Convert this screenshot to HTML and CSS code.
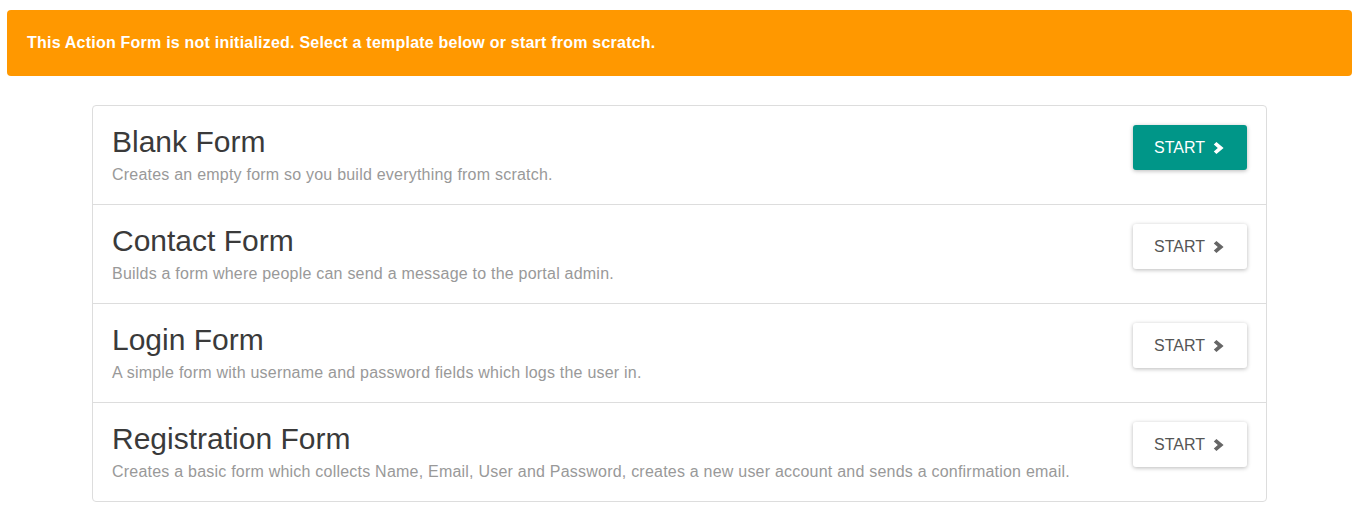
FILE: index.html
```html
<!DOCTYPE html>
<html lang="en">
<head>
<meta charset="utf-8">
<title>Action Form</title>
<link rel="stylesheet" href="styles.css">
</head>
<body>
<div class="alert">This Action Form is not initialized. Select a template below or start from scratch.</div>
<div class="list">
  <div class="item">
    <div class="info">
      <h3 class="title">Blank Form</h3>
      <p class="desc">Creates an empty form so you build everything from scratch.</p>
    </div>
    <button class="btn btn-primary">START <svg class="chev" viewBox="0 0 12 12" width="12" height="12"><polygon points="0.8,2.6 3.4,0 10.6,6 3.4,12 0.8,9.4 4.8,6"/></svg></button>
  </div>
  <div class="item">
    <div class="info">
      <h3 class="title">Contact Form</h3>
      <p class="desc">Builds a form where people can send a message to the portal admin.</p>
    </div>
    <button class="btn">START <svg class="chev" viewBox="0 0 12 12" width="12" height="12"><polygon points="0.8,2.6 3.4,0 10.6,6 3.4,12 0.8,9.4 4.8,6"/></svg></button>
  </div>
  <div class="item">
    <div class="info">
      <h3 class="title">Login Form</h3>
      <p class="desc">A simple form with username and password fields which logs the user in.</p>
    </div>
    <button class="btn">START <svg class="chev" viewBox="0 0 12 12" width="12" height="12"><polygon points="0.8,2.6 3.4,0 10.6,6 3.4,12 0.8,9.4 4.8,6"/></svg></button>
  </div>
  <div class="item">
    <div class="info">
      <h3 class="title">Registration Form</h3>
      <p class="desc">Creates a basic form which collects Name, Email, User and Password, creates a new user account and sends a confirmation email.</p>
    </div>
    <button class="btn">START <svg class="chev" viewBox="0 0 12 12" width="12" height="12"><polygon points="0.8,2.6 3.4,0 10.6,6 3.4,12 0.8,9.4 4.8,6"/></svg></button>
  </div>
</div>
</body>
</html>
```

FILE: styles.css
```css
html, body {
  margin: 0;
  padding: 0;
  background: #fff;
}
body {
  font-family: "Liberation Sans", Arial, sans-serif;
  color: #333;
  padding-top: 10px;
}
.alert {
  margin: 0 8px 0 7px;
  background: #ff9800;
  color: #fff;
  font-weight: bold;
  font-size: 16px;
  letter-spacing: 0.22px;
  line-height: 22px;
  padding: 22px 20px;
  border-radius: 4px;
}
.list {
  margin: 29px 93px 0 92px;
  border: 1px solid #ddd;
  border-radius: 4px;
}
.item {
  display: flex;
  align-items: flex-start;
  justify-content: space-between;
  padding: 19px;
  border-bottom: 1px solid #ddd;
}
.item:last-child {
  border-bottom: none;
}
.title {
  margin: 0;
  font-size: 30px;
  font-weight: normal;
  line-height: 33px;
  color: #3a3a3a;
}
.desc {
  margin: 6px 0 0;
  font-size: 16px;
  letter-spacing: 0.22px;
  line-height: 21px;
  color: #999;
}
.btn {
  flex: none;
  display: inline-flex;
  align-items: center;
  gap: 8px;
  height: 45px;
  width: 114px;
  justify-content: flex-start;
  padding: 0 0 0 21px;
  border: none;
  border-radius: 3px;
  background: #fff;
  color: #555;
  font-family: "Liberation Sans", Arial, sans-serif;
  font-size: 16px;
  box-shadow: 0 1px 4px rgba(0, 0, 0, 0.28);
}
.btn-primary {
  background: #009688;
  color: #fff;
}
.chev polygon {
  fill: #666;
}
.btn-primary .chev polygon {
  fill: #fff;
}
```
